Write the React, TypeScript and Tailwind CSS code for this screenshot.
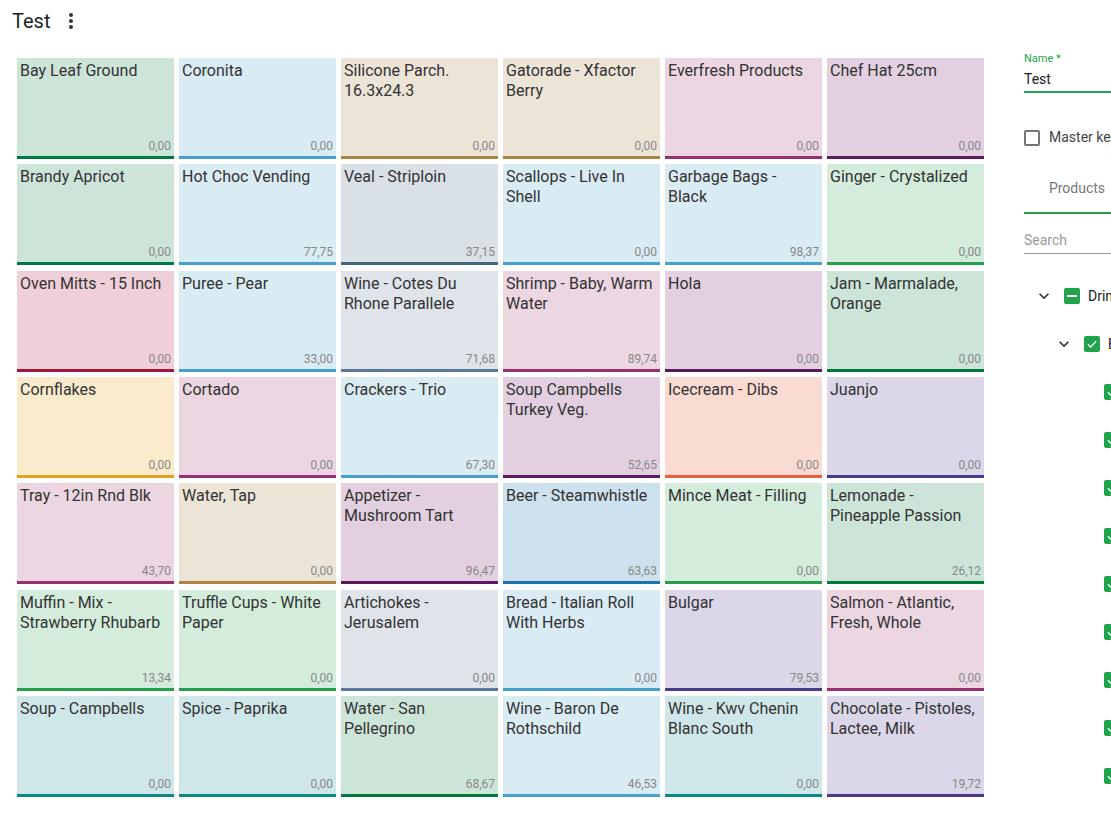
import React from 'react';

type Tone = { bg: string; bar: string };

const tones: Record<string, Tone> = {
    forest: { bg: 'bg-[#cde5d9]', bar: 'bg-[#007a3d]' },
    green: { bg: 'bg-[#d3ecdc]', bar: 'bg-[#24a04c]' },
    sky: { bg: 'bg-[#d9ebf3]', bar: 'bg-[#45a0cb]' },
    ocean: { bg: 'bg-[#cde1ee]', bar: 'bg-[#1d6fae]' },
    sand: { bg: 'bg-[#ede4d8]', bar: 'bg-[#a98442]' },
    rose: { bg: 'bg-[#ebd6e2]', bar: 'bg-[#982f71]' },
    plum: { bg: 'bg-[#e2d0e0]', bar: 'bg-[#5e1a5e]' },
    steel: { bg: 'bg-[#d9e0e6]', bar: 'bg-[#43687e]' },
    slate: { bg: 'bg-[#dfe3ea]', bar: 'bg-[#5a7897]' },
    berry: { bg: 'bg-[#efd0d8]', bar: 'bg-[#a2173b]' },
    butter: { bg: 'bg-[#faebcd]', bar: 'bg-[#e2a11c]' },
    peach: { bg: 'bg-[#fadbd3]', bar: 'bg-[#e8613a]' },
    indigo: { bg: 'bg-[#dbd7e8]', bar: 'bg-[#4a3a8b]' },
    teal: { bg: 'bg-[#cfe7e8]', bar: 'bg-[#088a85]' },
};

const keys: [string, string, string][] = [
    ['Bay Leaf Ground', '0,00', 'forest'],
    ['Coronita', '0,00', 'sky'],
    ['Silicone Parch. 16.3x24.3', '0,00', 'sand'],
    ['Gatorade - Xfactor Berry', '0,00', 'sand'],
    ['Everfresh Products', '0,00', 'rose'],
    ['Chef Hat 25cm', '0,00', 'plum'],

    ['Brandy Apricot', '0,00', 'forest'],
    ['Hot Choc Vending', '77,75', 'sky'],
    ['Veal - Striploin', '37,15', 'steel'],
    ['Scallops - Live In Shell', '0,00', 'sky'],
    ['Garbage Bags - Black', '98,37', 'sky'],
    ['Ginger - Crystalized', '0,00', 'green'],

    ['Oven Mitts - 15 Inch', '0,00', 'berry'],
    ['Puree - Pear', '33,00', 'sky'],
    ['Wine - Cotes Du Rhone Parallele', '71,68', 'slate'],
    ['Shrimp - Baby, Warm Water', '89,74', 'rose'],
    ['Hola', '0,00', 'plum'],
    ['Jam - Marmalade, Orange', '0,00', 'forest'],

    ['Cornflakes', '0,00', 'butter'],
    ['Cortado', '0,00', 'rose'],
    ['Crackers - Trio', '67,30', 'sky'],
    ['Soup Campbells Turkey Veg.', '52,65', 'plum'],
    ['Icecream - Dibs', '0,00', 'peach'],
    ['Juanjo', '0,00', 'indigo'],

    ['Tray - 12in Rnd Blk', '43,70', 'rose'],
    ['Water, Tap', '0,00', 'sand'],
    ['Appetizer - Mushroom Tart', '96,47', 'plum'],
    ['Beer - Steamwhistle', '63,63', 'ocean'],
    ['Mince Meat - Filling', '0,00', 'green'],
    ['Lemonade - Pineapple Passion', '26,12', 'forest'],

    ['Muffin - Mix - Strawberry Rhubarb', '13,34', 'green'],
    ['Truffle Cups - White Paper', '0,00', 'green'],
    ['Artichokes - Jerusalem', '0,00', 'slate'],
    ['Bread - Italian Roll With Herbs', '0,00', 'sky'],
    ['Bulgar', '79,53', 'indigo'],
    ['Salmon - Atlantic, Fresh, Whole', '0,00', 'rose'],

    ['Soup - Campbells', '0,00', 'teal'],
    ['Spice - Paprika', '0,00', 'teal'],
    ['Water - San Pellegrino', '68,67', 'forest'],
    ['Wine - Baron De Rothschild', '46,53', 'sky'],
    ['Wine - Kwv Chenin Blanc South', '0,00', 'teal'],
    ['Chocolate - Pistoles, Lactee, Milk', '19,72', 'indigo'],
];

const Chevron: React.FC = () => (
    <svg width="20" height="20" viewBox="0 0 24 24" className="shrink-0 text-[#333]">
        <path fill="currentColor" d="M16.59 8.59 12 13.17 7.41 8.59 6 10l6 6 6-6z" />
    </svg>
);

const GreenBox: React.FC<{ partial?: boolean }> = ({ partial }) => (
    <span className="flex h-4 w-4 shrink-0 items-center justify-center rounded-[2px] bg-[#22a34b]">
        {partial ? (
            <span className="h-[2px] w-[10px] bg-white" />
        ) : (
            <svg width="14" height="14" viewBox="0 0 24 24">
                <path fill="none" stroke="white" strokeWidth="2.4" d="M5 12.5l4.5 4.5L19 7.5" />
            </svg>
        )}
    </span>
);

const App: React.FC = () => {
    return (
        <div className="h-[836px] w-[1111px] overflow-hidden bg-white font-['Roboto',sans-serif] text-[#333]">
            {/* Page title */}
            <div className="flex h-[44px] items-center gap-[19px] pl-3 pb-[2px]">
                <h1 className="text-[20px] leading-7 text-[#222]">Test</h1>
                <svg width="4" height="16" viewBox="0 0 4 16" className="text-[#333]">
                    <circle cx="2" cy="2" r="2" fill="currentColor" />
                    <circle cx="2" cy="8" r="2" fill="currentColor" />
                    <circle cx="2" cy="14" r="2" fill="currentColor" />
                </svg>
            </div>

            <div className="mt-[14px] flex">
                {/* Key grid */}
                <div className="ml-[17px] grid shrink-0 grid-cols-[repeat(6,157px)] auto-rows-[101px] gap-x-[5px] gap-y-[5.33px]">
                    {keys.map(([name, price, tone]) => (
                        <div key={name} className={`flex flex-col ${tones[tone].bg}`}>
                            <div className="flex-1 px-[3px] pt-[3px] text-[16px] leading-5 text-[#333]">{name}</div>
                            <div className="pr-[3px] pb-[3px] text-right text-[12px] leading-[14px] text-[#888]">{price}</div>
                            <div className={`h-[3px] ${tones[tone].bar}`} />
                        </div>
                    ))}
                </div>

                {/* Settings panel */}
                <div className="ml-[40px] w-[260px] shrink-0">
                    <div className="-mt-[6px]">
                        <div className="text-[11px] leading-[14px] text-[#22a34b]">Name *</div>
                        <div className="border-b-2 border-[#22a34b] pt-[4px] pb-[3px] text-[14px] leading-[18px] text-[#222]">Test</div>
                    </div>

                    <div className="mt-[34px] flex items-center gap-[9px]">
                        <span className="h-4 w-4 rounded-[2px] border-2 border-[#757575]" />
                        <span className="text-[14px] text-[#444]">Master key</span>
                    </div>

                    <div className="mt-[28px] w-[106px] border-b-2 border-[#22a34b] pb-[13px] pt-[2px] text-center text-[14px] text-[#777]">
                        Products
                    </div>

                    <div className="mt-[17px] border-b border-[#999] pb-[4px] text-[14px] leading-[18px] text-[#999]">Search</div>

                    {/* Product tree */}
                    <div className="mt-[18px] flex flex-col">
                        <div className="flex h-12 items-center pl-[10px]">
                            <Chevron />
                            <span className="ml-[10px]"><GreenBox partial /></span>
                            <span className="ml-[8px] text-[14px] text-[#222]">Drinks</span>
                        </div>
                        <div className="flex h-12 items-center pl-[30px]">
                            <Chevron />
                            <span className="ml-[10px]"><GreenBox /></span>
                            <span className="ml-[8px] text-[14px] text-[#222]">Beverages</span>
                        </div>
                        {['Coca Cola', 'Fanta', 'Sprite', 'Water', 'Tonic', 'Lemonade', 'Ice Tea', 'Soda', 'Juice'].map((item) => (
                            <div key={item} className="flex h-12 items-center gap-[8px] pl-[80px]">
                                <GreenBox />
                                <span className="text-[14px] text-[#222]">{item}</span>
                            </div>
                        ))}
                    </div>
                </div>
            </div>
        </div>
    );
};

export default App;
